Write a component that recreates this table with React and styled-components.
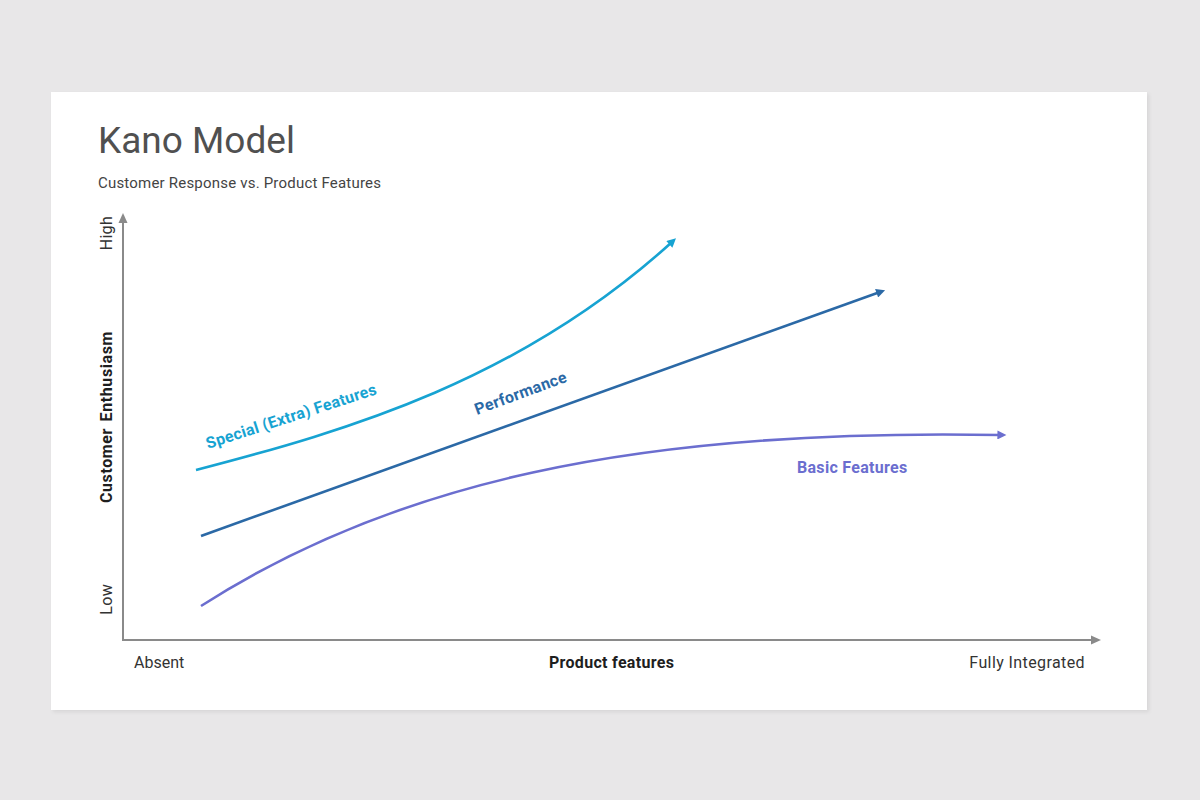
import React from "react"
import styled, { createGlobalStyle } from "styled-components"

const GlobalStyle = createGlobalStyle`
  body {
    margin: 0;
    background: #e8e7e8;
    font-family: Roboto, "Liberation Sans", sans-serif;
  }
`

const Page = styled.div`
  width: 1200px;
  height: 800px;
  padding: 92px 0 0 51px;
  box-sizing: border-box;
`

const Slide = styled.div`
  width: 1096px;
  height: 618px;
  box-sizing: border-box;
  padding: 27px 0 0 47px;
  background: #fff;
  box-shadow: 2px 2px 4px rgba(0, 0, 0, 0.08);
  overflow: hidden;
`

const Title = styled.h1`
  margin: 0;
  font-size: 37px;
  line-height: 44px;
  font-weight: 400;
  color: #505050;
`

const Subtitle = styled.p`
  margin: 10px 0 0;
  font-size: 15px;
  line-height: 20px;
  letter-spacing: 0.2px;
  color: #444;
`

const ChartRow = styled.div`
  display: flex;
  margin-top: 17px;
  height: 435px;
`

const YLabels = styled.div`
  width: 18px;
  display: flex;
  flex-direction: column;
  justify-content: space-between;
  align-items: center;
  padding: 6px 0 30px;
  box-sizing: border-box;
`

const YLabel = styled.span`
  writing-mode: vertical-rl;
  transform: rotate(180deg);
  font-size: 16px;
  line-height: 18px;
  letter-spacing: ${p => (p.$strong ? "0.6px" : "0.3px")};
  word-spacing: ${p => (p.$strong ? "2px" : "0")};
  color: ${p => (p.$strong ? "#1e1e1e" : "#333")};
  font-weight: ${p => (p.$strong ? 700 : 400)};
  white-space: nowrap;
`

const Plot = styled.svg`
  display: block;
  flex: none;
`

const XLabels = styled.div`
  display: grid;
  grid-template-columns: 415px auto 1fr;
  width: 987px;
  padding-left: 36px;
  box-sizing: border-box;
  margin-top: 8px;
  font-size: 16px;
  line-height: 20px;
  color: #333;
`

const XLabel = styled.span`
  font-weight: ${p => (p.$strong ? 700 : 400)};
  color: ${p => (p.$strong ? "#1e1e1e" : "#333")};
  letter-spacing: ${p => p.$spacing || "0"};
  justify-self: ${p => p.$align || "start"};
`

const CurveLabel = styled.text`
  font-family: Roboto, "Liberation Sans", sans-serif;
  font-size: 16px;
  font-weight: 700;
  letter-spacing: 0.3px;
`

const curves = [
  {
    id: "special",
    color: "#17a3d2",
    d: "M196,470 C350,430 520,380 672,242",
  },
  {
    id: "perf",
    color: "#2b69a6",
    d: "M201,536 L880,292",
  },
  {
    id: "basic",
    color: "#6b6ecf",
    d: "M201,606 C390,485 630,428 1001,435",
  },
]

const AXIS = "#8a8a8a"

export default function App() {
  return (
    <Page>
      <GlobalStyle />
      <Slide>
        <Title>Kano Model</Title>
        <Subtitle>Customer Response vs. Product Features</Subtitle>
        <ChartRow>
          <YLabels>
            <YLabel>High</YLabel>
            <YLabel $strong>Customer Enthusiasm</YLabel>
            <YLabel>Low</YLabel>
          </YLabels>
          <Plot width="1000" height="435" viewBox="116 210 1000 435">
            <defs>
              {curves.map(c => (
                <marker
                  key={c.id}
                  id={`arrow-${c.id}`}
                  viewBox="0 0 10 10"
                  refX="4"
                  refY="5"
                  markerUnits="userSpaceOnUse"
                  markerWidth="10"
                  markerHeight="9"
                  orient="auto"
                >
                  <path d="M0,0 L10,5 L0,10 z" fill={c.color} />
                </marker>
              ))}
            </defs>

            {/* axes */}
            <path d="M123,640 L123,222" stroke={AXIS} strokeWidth="2" fill="none" />
            <path d="M118.5,223 L123,213 L127.5,223 z" fill={AXIS} />
            <path d="M122,640 L1092,640" stroke={AXIS} strokeWidth="2" fill="none" />
            <path d="M1091,635.5 L1101,640 L1091,644.5 z" fill={AXIS} />

            {curves.map(c => (
              <path
                key={c.id}
                d={c.d}
                stroke={c.color}
                strokeWidth="2.6"
                fill="none"
                markerEnd={`url(#arrow-${c.id})`}
              />
            ))}

            <CurveLabel x="208" y="449" transform="rotate(-18 208 449)" fill="#17a3d2">
              Special (Extra) Features
            </CurveLabel>
            <CurveLabel x="477" y="415" transform="rotate(-20.3 477 415)" fill="#2b69a6">
              Performance
            </CurveLabel>
            <CurveLabel x="797" y="473" fill="#6b6ecf">
              Basic Features
            </CurveLabel>
          </Plot>
        </ChartRow>
        <XLabels>
          <XLabel>Absent</XLabel>
          <XLabel $strong $spacing="0.3px">Product features</XLabel>
          <XLabel $align="end" $spacing="0.4px">Fully Integrated</XLabel>
        </XLabels>
      </Slide>
    </Page>
  )
}
